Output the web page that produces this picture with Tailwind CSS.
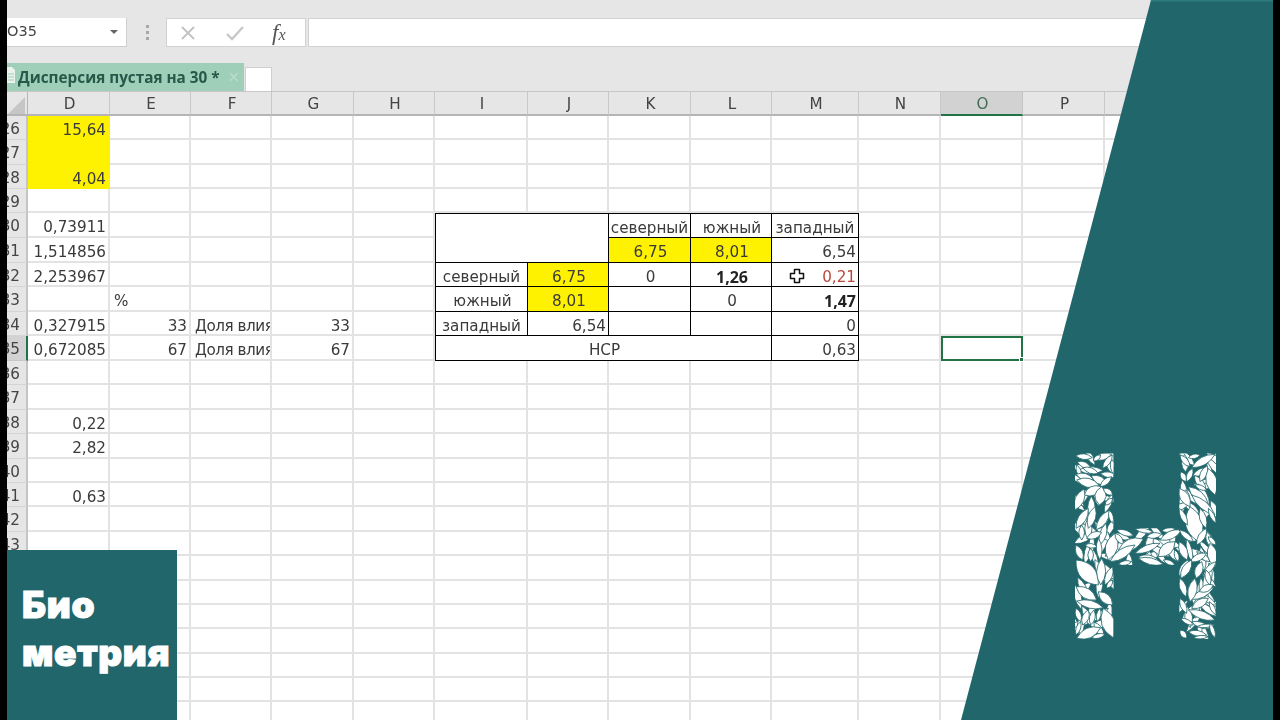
<!DOCTYPE html>
<html lang="ru">

<head>
  <meta charset="UTF-8">
  <title>Биометрия</title>
  <script src="https://cdn.jsdelivr.net/npm/@tailwindcss/browser@4"></script>
</head>

<body class="bg-black">
  <div class="relative w-[1280px] h-[720px] overflow-hidden bg-black pl-[7px] font-['DejaVu_Sans',sans-serif]">
    <div class="w-[1266px] h-[720px] overflow-hidden bg-[#e6e6e6] blur-[0.35px]">
      <!-- formula bar -->
      <div class="flex items-center h-[29px] mt-[18px]">
        <div class="flex items-center justify-between w-[120px] h-[29px] bg-white border-r border-b border-[#cfcfcf] pr-[8px] text-[14.5px] text-[#444]">
          <span>O35</span>
          <span class="w-0 h-0 border-x-[4px] border-x-transparent border-t-[4px] border-t-[#666]"></span>
        </div>
        <div class="flex flex-col gap-[3px] ml-[19px] mr-[17px]">
          <span class="w-[3px] h-[3px] bg-[#a8a8a8]"></span>
          <span class="w-[3px] h-[3px] bg-[#a8a8a8]"></span>
          <span class="w-[3px] h-[3px] bg-[#a8a8a8]"></span>
        </div>
        <div class="flex items-center w-[140px] h-[29px] bg-white border border-[#d2d2d2] pl-[13px] gap-[30px]">
          <svg width="16" height="16" viewBox="0 0 16 16" class="shrink-0"><path d="M2 2 14 14M14 2 2 14" stroke="#c2c2c2" stroke-width="1.8" fill="none"/></svg>
          <svg width="18" height="16" viewBox="0 0 18 16" class="shrink-0"><path d="M1 9 6 14 17 2" stroke="#c8c8c8" stroke-width="2.4" fill="none"/></svg>
          <span class="font-['Liberation_Serif',serif] italic leading-none text-[#555] -ml-[2px] whitespace-nowrap"><span class="text-[23px]">f</span><span class="text-[16px]">x</span></span>
        </div>
        <div class="w-[860px] h-[29px] ml-[2px] bg-white border border-[#d2d2d2]"></div>
      </div>
      <!-- sheet tabs -->
      <div class="flex items-end h-[28px] mt-[17px] border-b border-[#c8c8c8]">
        <div class="relative flex items-center w-[237px] h-[28px] bg-[#9fcfb8] pl-[11px]">
          <svg width="8" height="16" viewBox="0 0 8 16" class="absolute left-0 top-[4px]"><path d="M0 0H5L8 3V16H0Z" fill="#e9f2ec"/><path d="M1 7H7M1 10H7M1 13H7" stroke="#9fcfb8"/></svg>
          <span class="font-['Open_Sans',sans-serif] font-bold text-[15.3px] text-[#27594a] whitespace-nowrap">Дисперсия пустая на 30 *</span>
          <span class="ml-[8px] text-[15px] leading-none text-[#bcdccd]">×</span>
        </div>
        <div class="w-[27px] h-[24px] ml-[1px] bg-white border-x border-t border-[#cfcfcf]"></div>
      </div>
      <!-- grid, filled in below -->
      <div id="sheet" class="grid grid-cols-[21px_82px_81px_81px_82px_81px_93px_81px_82px_81px_87px_82px_82px_82px_168px] grid-rows-[24px_repeat(4,24.36px)_repeat(6,24.6px)_repeat(15,24.4px)] bg-white text-[15.2px] text-[#3a3a3a]"></div>
    </div>

    <!-- right panel -->
    <svg class="absolute left-[961px] top-0" width="312" height="720" viewBox="0 0 312 720">
      <path d="M190 0H312V720H0Z" fill="#20666b"/>
      <path d="M190 0H312V1.5H189.6Z" fill="#2f7a7e"/>
    </svg>
    <svg id="logo" class="absolute left-[1060px] top-[445px]" width="170" height="205" viewBox="0 0 510 615">
      <defs>
        <clipPath id="h-shape">
          <path d="M45 25H160V250H358V25H468V582H358V360H160V582H45Z"/>
        </clipPath>
      </defs>
      <g id="leaves" clip-path="url(#h-shape)" fill="#fff" stroke="#20666b" stroke-width="2.5"></g>
    </svg>

    <!-- corner badge -->
    <div class="absolute left-[7px] top-[550px] w-[170px] h-[170px] bg-[#20666b] pl-[15px] pt-[31px] font-['Inter',sans-serif] font-black text-white text-[37px] leading-[48px] tracking-[0.7px] [-webkit-text-stroke:1px_white]">
      <div>Био</div>
      <div>метрия</div>
    </div>
  </div>

  <script>
    var cols = ['', 'D', 'E', 'F', 'G', 'H', 'I', 'J', 'K', 'L', 'M', 'N', 'O', 'P', 'Q'];
    var base = 'min-w-0 overflow-hidden whitespace-nowrap pl-[4px] pr-[2px] pt-[2px] leading-[24px] ';
    var plain = 'border-r-2 border-b-2 border-[#e3e3e3] ';
    var yellow = 'border-r-2 border-b-2 border-[#fff200] bg-[#fff200] text-right';
    var black = 'border-r border-b border-black ';
    var bold = "font-['Open_Sans',sans-serif] font-bold text-[16px] leading-[23px] text-[#222] ";

    // address: [text, classes]
    var cells = {
      D26: ['15,64', yellow],
      D27: ['', yellow],
      D28: ['4,04', yellow],
      D30: ['0,73911', plain + 'text-right'],
      D31: ['1,514856', plain + 'text-right'],
      D32: ['2,253967', plain + 'text-right'],
      E33: ['%', plain],
      D34: ['0,327915', plain + 'text-right'],
      E34: ['33', plain + 'text-right'],
      F34: ['Доля влияния', plain + 'tracking-[-0.45px]'],
      G34: ['33', plain + 'text-right'],
      D35: ['0,672085', plain + 'text-right'],
      E35: ['67', plain + 'text-right'],
      F35: ['Доля влияния', plain + 'tracking-[-0.45px]'],
      G35: ['67', plain + 'text-right'],
      D38: ['0,22', plain + 'text-right'],
      D39: ['2,82', plain + 'text-right'],
      D41: ['0,63', plain + 'text-right'],

      I30: ['', black + 'border-t border-l col-span-2 row-span-2'],
      K30: ['северный', black + 'border-t text-center !px-0'],
      L30: ['южный', black + 'border-t text-center'],
      M30: ['западный', black + 'border-t text-center !px-0'],
      K31: ['6,75', black + 'bg-[#fff200] text-center'],
      L31: ['8,01', black + 'bg-[#fff200] text-center'],
      M31: ['6,54', black + 'text-right'],
      I32: ['северный', black + 'border-l text-center !px-0'],
      J32: ['6,75', black + 'bg-[#fff200] text-center'],
      K32: ['0', black + 'text-center'],
      L32: ['1,26', black + bold + 'text-center'],
      M32: ['0,21', black + 'text-right text-[#b9483c] relative'],
      I33: ['южный', black + 'border-l text-center'],
      J33: ['8,01', black + 'bg-[#fff200] text-center'],
      K33: ['', black],
      L33: ['0', black + 'text-center'],
      M33: ['1,47', black + bold + 'text-right'],
      I34: ['западный', black + 'border-l text-center !px-0'],
      J34: ['6,54', black + 'text-right'],
      K34: ['', black],
      L34: ['', black],
      M34: ['0', black + 'text-right'],
      I35: ['НСР', black + 'border-l col-span-4 text-center'],
      M35: ['0,63', black + 'text-right'],
      O35: ['', 'relative !overflow-visible border-2 border-[#217346]']
    };
    var covered = { J30: 1, I31: 1, J31: 1, J35: 1, K35: 1, L35: 1 };

    var html = '';

    // column headers
    html += '<div class="relative bg-[#e6e6e6] border-r border-b-2 border-[#b5b5b5]"><svg class="absolute left-[1px] top-[5px]" width="17" height="17"><path d="M17 0V17H0Z" fill="#c6c6c6"/></svg></div>';
    cols.slice(1).forEach(function (c) {
      if (c === 'Q') html += '<div class="bg-[#e6e6e6] border-b-2 border-[#b5b5b5]"></div>';
      else if (c === 'O') html += '<div class="bg-[#d2d2d2] border-r border-r-[#c4c4c4] border-b-2 border-b-[#217346] text-center pl-[2px] pt-[1px] leading-[23px] text-[#3f6b57]">O</div>';
      else html += '<div class="bg-[#e6e6e6] border-r border-r-[#c8c8c8] border-b-2 border-b-[#b5b5b5] text-center pl-[2px] pt-[1px] leading-[23px] text-[#444]">' + c + '</div>';
    });

    for (var r = 26; r <= 50; r++) {
      var headCls = r === 35
        ? 'overflow-hidden bg-[#d2d2d2] border-r-2 border-[#217346] border-b border-b-[#c8c8c8] text-right pr-[6px] pt-[1px] leading-[24px] text-[#444]'
        : 'overflow-hidden bg-[#e6e6e6] border-r-2 border-[#c4c4c4] border-b border-b-[#d4d4d4] text-right pr-[6px] pt-[1px] leading-[24px] text-[#444]';
      html += '<div class="' + headCls + '"><span class="float-right whitespace-nowrap">' + r + '</span></div>';
      cols.slice(1).forEach(function (c) {
        var id = c + r;
        if (covered[id]) return;
        var cell = cells[id];
        var cls = base + (cell ? cell[1] : plain);
        var extra = '';
        if (id === 'M32') extra = '<svg class="absolute left-[17px] top-[5px]" width="16" height="16" viewBox="0 0 16 16"><path d="M5.5 1.5H10.5V5.5H14.5V10.5H10.5V14.5H5.5V10.5H1.5V5.5H5.5Z" fill="#fff" stroke="#111" stroke-width="1.5" stroke-linejoin="round"/></svg>';
        if (id === 'O35') extra = '<span class="absolute -right-[3px] -bottom-[3px] w-[5px] h-[5px] bg-[#217346] border border-white"></span>';
        html += '<div class="' + cls + '">' + (cell ? cell[0] : '') + extra + '</div>';
      });
    }
    document.getElementById('sheet').innerHTML = html;

    function leafPath(l, k) {
      var mx = (l[0] + l[2]) / 2, my = (l[1] + l[3]) / 2;
      var dx = l[2] - l[0], dy = l[3] - l[1], len = Math.sqrt(dx * dx + dy * dy);
      var w = l[4] * k;
      var nx = -dy / len * w, ny = dx / len * w;
      return '<path d="M' + l[0] + ' ' + l[1] + 'Q' + (mx + nx) + ' ' + (my + ny) + ' ' + l[2] + ' ' + l[3] + 'Q' + (mx - nx) + ' ' + (my - ny) + ' ' + l[0] + ' ' + l[1] + 'Z"/>';
    }

    // filler under the traced leaves so the H reads as densely as the original
    var fill = [], seed = 7;
    function rnd() { seed = (seed * 16807) % 2147483647; return seed / 2147483647; }
    function spray(x0, y0, x1, y1, n) {
      for (var i = 0; i < n; i++) {
        var x = x0 + rnd() * (x1 - x0), y = y0 + rnd() * (y1 - y0);
        var a = (rnd() * 2.2 - 1.1) + (rnd() < 0.5 ? 1.57 : 0.6);
        var d = 25 + rnd() * 15;
        fill.push([x - Math.cos(a) * d, y - Math.sin(a) * d, x + Math.cos(a) * d, y + Math.sin(a) * d, 10 + rnd() * 5]);
      }
    }
    spray(45, 25, 160, 582, 55);
    spray(358, 25, 468, 582, 55);
    spray(160, 250, 358, 360, 16);

    // leaves of the H, in the 510x615 logo box: x1, y1, x2, y2, width
    var leaves = [
      [47,32,97,38,10],[100,42,155,28,12],[52,50,92,68,10],[100,48,122,30,8],[128,70,157,30,10],
      [50,60,62,95,8],[48,88,100,103,12],[68,68,115,85,10],[50,105,118,122,16],[120,125,155,95,10],
      [72,150,125,125,16],[125,125,118,180,20],[130,130,158,150,10],[45,195,72,132,16],[48,250,85,190,14],
      [85,250,105,185,14],[108,255,150,195,14],[135,180,158,160,8],[148,195,158,235,8],[120,300,138,235,12],
      [65,240,65,285,10],[80,280,125,262,12],[75,300,112,305,8],[48,300,68,345,12],[145,345,165,265,22],
      [120,345,115,280,10],[92,350,92,310,10],[48,345,115,420,28],[122,420,125,340,16],[135,420,158,365,12],
      [48,425,110,465,18],[50,468,130,488,14],[115,440,158,480,16],[140,430,158,405,8],[48,490,62,530,10],
      [68,540,85,495,12],[92,540,102,495,10],[112,530,120,490,8],[130,490,160,578,24],[50,580,122,548,18],
      [95,578,135,568,8],[48,570,62,530,8],
      [170,255,220,272,10],[225,252,280,262,8],[305,258,345,252,8],[165,265,190,298,10],[260,275,305,268,10],
      [300,285,365,255,14],[175,315,250,282,20],[150,350,225,300,16],[225,325,300,295,12],[295,335,345,290,20],
      [235,335,295,345,12],[175,358,215,350,8],[235,340,310,358,12],[310,345,345,360,8],[345,315,355,350,8],
      [385,38,420,30,8],[360,30,390,65,10],[395,68,465,28,14],[362,80,378,110,10],[380,110,398,70,10],
      [420,110,442,62,12],[445,70,465,150,20],[405,120,440,135,8],[385,125,445,178,16],[358,130,390,185,16],
      [395,150,465,210,14],[390,185,415,290,30],[358,190,382,240,10],[420,190,438,250,12],[445,190,468,235,8],
      [358,255,400,290,10],[410,300,440,250,12],[445,275,468,300,8],[358,290,382,345,14],[410,320,450,350,10],
      [390,350,440,325,12],[450,295,465,365,18],[362,400,395,345,14],[408,400,425,350,14],[430,390,468,350,10],
      [360,400,378,455,12],[390,470,405,400,16],[418,440,460,420,12],[438,375,450,420,10],[360,460,380,505,10],
      [395,490,445,460,14],[385,495,465,525,14],[448,470,468,510,8],[362,520,400,540,8],[360,555,380,580,10],
      [395,530,450,550,10],[385,560,440,570,10],[410,545,465,540,6],[450,535,465,578,8],[400,578,445,575,6]
    ];
    var paths = fill.map(function (l) { return leafPath(l, 1.6); }).concat(leaves.map(function (l) { return leafPath(l, 1.7); }));
    document.getElementById('leaves').innerHTML = paths.join('');
  </script>
</body>

</html>
